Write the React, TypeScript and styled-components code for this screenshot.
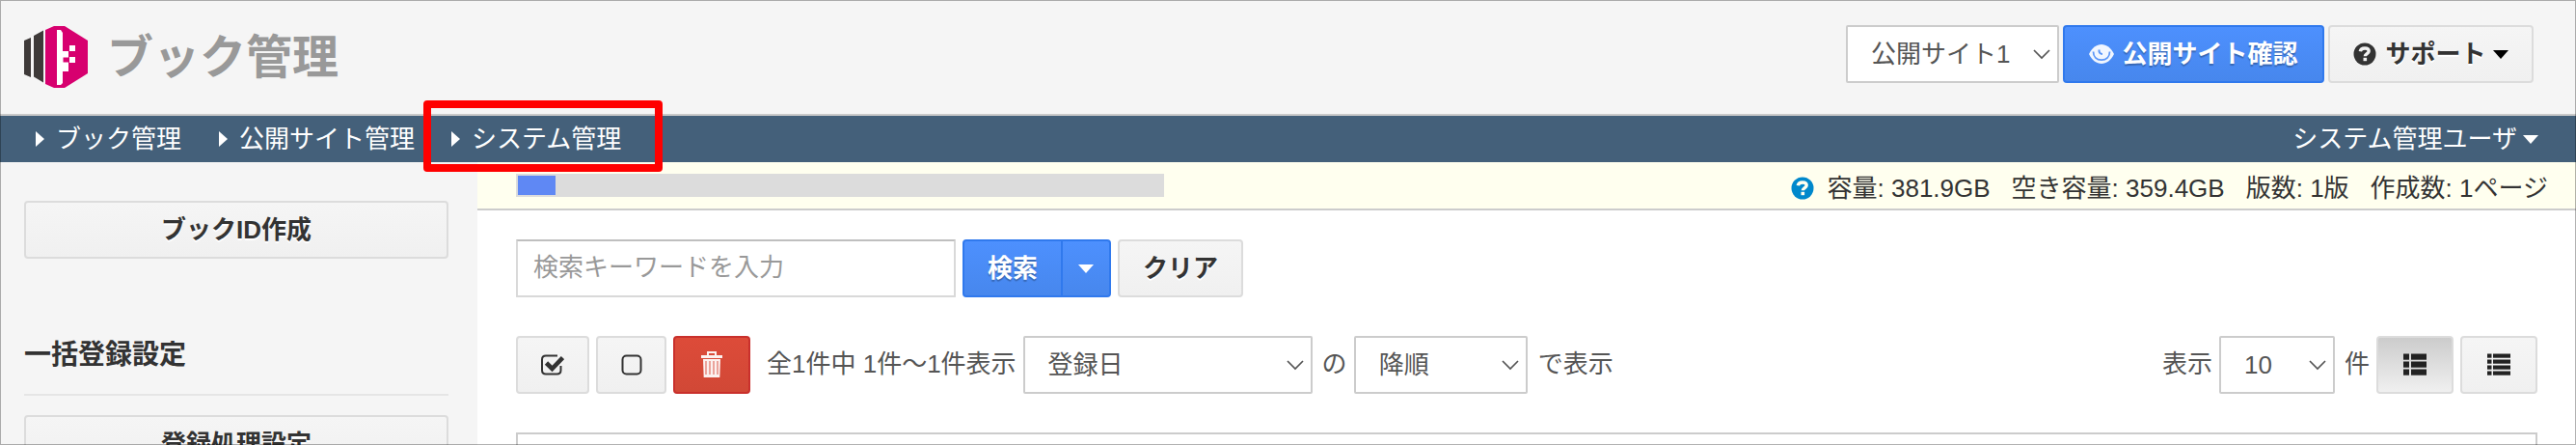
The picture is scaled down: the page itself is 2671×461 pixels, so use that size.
import React, { FC } from "react";
import styled, { createGlobalStyle, css } from "styled-components";

const GlobalStyle = createGlobalStyle`
  * {
    box-sizing: border-box;
  }
  body {
    margin: 0;
    background: #fff;
    color: #333;
    font-family: "Liberation Sans", "Noto Sans CJK JP", sans-serif;
    font-size: 26px;
    line-height: 38px;
    overflow: hidden;
  }
`;

interface gapProps {
  before?: number;
  after?: number;
}

interface sizeProps {
  width: number;
}

const Page = styled.div`
  position: relative;
  width: 2671px;
  height: 461px;
  overflow: hidden;
`;

const Frame = styled.div`
  position: absolute;
  inset: 0;
  border: 1px solid rgba(0, 0, 0, 0.3);
  pointer-events: none;
`;

const Header = styled.header`
  display: flex;
  justify-content: space-between;
  height: 120px;
  padding: 26px 44px 0 25px;
  background: #f5f5f5;
  border-bottom: 2px solid #c9c9c9;
`;

const Brand = styled.div`
  display: flex;
  align-items: flex-start;
  gap: 20px;
  svg {
    margin-top: 1px;
  }
`;

const Title = styled.h1`
  margin: 0;
  color: #999;
  font-size: 48px;
  font-weight: bold;
  line-height: 68px;
`;

const HeaderTools = styled.div`
  display: flex;
  align-items: flex-start;
  gap: 4px;
`;

const Select = styled.div<sizeProps>`
  display: flex;
  flex-shrink: 0;
  align-items: center;
  justify-content: space-between;
  width: ${(props) => props.width}px;
  height: 60px;
  padding: 0 7px 0 24px;
  background: #fff;
  border: 2px solid #ccc;
  border-radius: 2px;
  color: #555;
  white-space: nowrap;
`;

const tones = {
  plain: css`
    background: linear-gradient(#f5f5f5, #f0f0f0);
    border-color: #dcdcdc;
    color: #333;
    text-shadow: 0 2px 0 #fff;
  `,
  pressed: css`
    background: linear-gradient(#ccc, #f0f0f0);
    border-color: #dcdcdc;
    color: #333;
  `,
  blue: css`
    background: linear-gradient(#4d90fe, #4787ed);
    border-color: #3079ed;
    color: #fff;
    text-shadow: 0 2px 1px rgba(0, 0, 0, 0.25);
  `,
  red: css`
    background: linear-gradient(#dd4b39, #d14836);
    border-color: #c9302c;
    color: #fff;
  `,
};

interface buttonProps {
  width: number;
  tone?: keyof typeof tones;
}

const Button = styled.button<buttonProps>`
  display: flex;
  flex-shrink: 0;
  align-items: center;
  justify-content: center;
  width: ${(props) => props.width}px;
  height: 60px;
  padding: 0;
  border: 2px solid;
  border-radius: 4px;
  font: inherit;
  font-weight: bold;
  white-space: nowrap;
  ${(props) => tones[props.tone || "plain"]}
`;

const ButtonLabel = styled.span<gapProps>`
  margin: 0 ${(props) => props.after || 0}px 0 ${(props) => props.before || 0}px;
  padding-bottom: 1px;
`;

const Nav = styled.nav`
  display: flex;
  height: 48px;
  padding: 0 39px 0 37px;
  background: #44607a;
  color: #fff;
`;

const NavItem = styled.a<sizeProps>`
  display: flex;
  align-items: center;
  gap: 12px;
  width: ${(props) => props.width}px;
  height: 48px;
  white-space: nowrap;
`;

const NavUser = styled.a`
  display: flex;
  align-items: center;
  gap: 6px;
  height: 48px;
  margin-left: auto;
`;

const ArrowRight = styled.i`
  border: solid transparent;
  border-width: 8px 0 8px 9px;
  border-left-color: #fff;
`;

const Caret = styled.i<{ color?: string }>`
  border: solid transparent;
  border-width: 9px 8px 0;
  border-top-color: ${(props) => props.color || "#fff"};
`;

// red marker laid over the system menu
const Marker = styled.div`
  position: absolute;
  left: 439px;
  top: 104px;
  width: 248px;
  height: 74px;
  border: 8px solid #f00;
  border-radius: 4px;
`;

const Columns = styled.div`
  display: flex;
  height: 293px;
`;

const Sidebar = styled.aside`
  width: 495px;
  padding: 40px 30px 0 25px;
  background: #f5f5f5;
`;

const SidebarHeading = styled.h2`
  height: 142px;
  margin: 0 0 20px;
  padding-top: 80px;
  border-bottom: 2px solid #e5e5e5;
  font-size: 28px;
  line-height: 40px;
`;

const Main = styled.main`
  flex: 1;
`;

const StatusBar = styled.div`
  display: flex;
  justify-content: space-between;
  height: 50px;
  padding: 0 29px 0 40px;
  background: #ffffef;
  border-bottom: 2px solid #ccc;
`;

const Meter = styled.div`
  width: 672px;
  height: 24px;
  margin-top: 12px;
  padding: 2px;
  background: #dcdcdc;
`;

const MeterFill = styled.div`
  height: 20px;
  background: #5f88f4;
`;

const StatusList = styled.div`
  display: flex;
  align-items: center;
  gap: 22px;
  height: 54px;
  white-space: nowrap;
  svg {
    margin-right: -8px;
  }
`;

const SearchRow = styled.div`
  display: flex;
  gap: 7px;
  padding: 30px 40px 0;
`;

const SearchInput = styled.input`
  width: 456px;
  height: 60px;
  padding: 0 16px 1px;
  border: 2px solid #d9d9d9;
  border-top-color: #bfbfbf;
  border-radius: 1px;
  font: inherit;
  &::placeholder {
    color: #999;
    opacity: 1;
  }
`;

const SplitButton = styled.div`
  display: flex;
  button:first-child {
    border-radius: 4px 0 0 4px;
  }
  button:last-child {
    margin-left: -2px;
    border-radius: 0 4px 4px 0;
  }
`;

const ListRow = styled.div`
  display: flex;
  gap: 7px;
  padding: 40px 40px 0;
`;

const RowText = styled.span<gapProps>`
  margin-left: ${(props) => props.before || 0}px;
  padding-top: 10px;
  color: #555;
  white-space: nowrap;
`;

const RowEnd = styled.div`
  display: flex;
  gap: 7px;
  margin-left: auto;
`;

const Table = styled.div`
  height: 40px;
  margin: 40px 40px 0;
  border: 2px solid #ccc;
`;

const Logo: FC = () => (
  <svg width="66" height="64" viewBox="0 0 66 64">
    <path fill="#3e3a39" d="M0 15l7-3v41l-7-3zM10 10l10-5.500v54l-10-6z" />
    <path fill="#d7006f" d="M22 4l9-4h11l24 15v34L42 64H31l-9-4z" />
    <path
      fill="#fff"
      d="M34 4h4l2 3v19h6v21h-6v12l-2 2h-4z"
    />
    <path fill="#fff" d="M47 20h6v6h-6zM47 32h6v6h-6z" />
    <path fill="#d7006f" d="M40.500 32.500h5.500v5h-5.500z" />
    <path fill="#d7006f" d="M36 0h2v2.500h-2zM36 61.500h2V64h-2z" />
  </svg>
);

const Chevron: FC = () => (
  <svg width="18" height="12" viewBox="0 0 18 12" fill="none" stroke="#555" strokeWidth="1.700">
    <path d="M1 2l8 8 8-8" />
  </svg>
);

const EyeIcon: FC = () => (
  <svg width="26" height="20" viewBox="0 0 26 20">
    <path fill="#fff" opacity=".92" d="M0 10C3 3.500 8 0 13 0s10 3.500 13 10c-3 6.500-8 10-13 10S3 16.500 0 10z" />
    <path
      fill="none"
      stroke="#5b96f8"
      strokeWidth="1.800"
      d="M4.500 7.500C4.500 13 8 16.200 13 16.200s8.500-3.200 8.500-8.700"
    />
    <path fill="none" stroke="#5b96f8" strokeWidth="2" d="M10.500 5.500c-.3 3 1.200 4.500 3.500 4.500" />
  </svg>
);

const HelpIcon: FC<{ color: string; mark: string }> = ({ color, mark }) => (
  <svg width="24" height="24" viewBox="0 0 24 24">
    <circle cx="12" cy="12" r="11.500" fill={color} />
    <path
      fill="none"
      stroke={mark}
      strokeWidth="3.400"
      d="M7.300 9.300C7.600 7 9.500 6 12 6c2.600 0 4.200 1.200 4.200 3 0 2.400-3.800 2.700-3.900 5.200"
    />
    <path fill={mark} d="M10.500 15.800h3.600v3.400h-3.600z" />
  </svg>
);

const CheckIcon: FC = () => (
  <svg width="24" height="22" viewBox="0 0 24 22" fill="none" stroke="#333">
    <path
      strokeWidth="2"
      d="M17 1.500H5Q1 1.500 1 5.500v11q0 4 4 4h11.500q4 0 4-4V12"
    />
    <path strokeWidth="4.600" d="M5.500 9l6 6L22.500 3.500" />
  </svg>
);

const BoxIcon: FC = () => (
  <svg width="22" height="22" viewBox="0 0 22 22" fill="none" stroke="#333" strokeWidth="2">
    <rect x="1.500" y="1.500" width="19" height="19" rx="4" />
  </svg>
);

const TrashIcon: FC = () => (
  <svg width="22" height="28" viewBox="0 0 22 28">
    <path fill="#fff" opacity=".92" d="M6 4V0h10v4h6v3H0V4zM8 4h6V2H8z" fillRule="evenodd" />
    <path fill="#fff" opacity=".92" d="M2 8h18l-.7 19H2.700z" />
    <path
      stroke="#eba39b"
      strokeWidth="2"
      d="M5 10v14M9 10v14M13 10v14M17 10v14"
    />
  </svg>
);

const ListIcon: FC<{ rows: number }> = ({ rows }) => {
  const step = rows === 3 ? 8 : 6;
  const bar = rows === 3 ? 6.2 : 4.2;

  return (
    <svg width="26" height="24" viewBox="0 0 26 24" fill="#222">
      {Array.from({ length: rows }, (_, i) => (
        <g key={i}>
          <rect x="1" y={i * step + 0.5} width={rows === 3 ? 6 : 4.5} height={bar} />
          <rect x={rows === 3 ? 9 : 7} y={i * step + 0.5} width={rows === 3 ? 16 : 18} height={bar} />
        </g>
      ))}
    </svg>
  );
};

const App: FC = () => {
  return (
    <Page>
      <GlobalStyle />
      <Header>
        <Brand>
          <Logo />
          <Title>ブック管理</Title>
        </Brand>
        <HeaderTools>
          <Select width={221}>
            公開サイト1
            <Chevron />
          </Select>
          <Button width={271} tone="blue">
            <EyeIcon />
            <ButtonLabel before={8}>公開サイト確認</ButtonLabel>
          </Button>
          <Button width={213}>
            <HelpIcon color="#333" mark="#f3f3f3" />
            <ButtonLabel before={9} after={7}>サポート</ButtonLabel>
            <Caret color="#000" />
          </Button>
        </HeaderTools>
      </Header>
      <Nav>
        <NavItem width={190}>
          <ArrowRight />
          ブック管理
        </NavItem>
        <NavItem width={241}>
          <ArrowRight />
          公開サイト管理
        </NavItem>
        <NavItem width={200}>
          <ArrowRight />
          システム管理
        </NavItem>
        <NavUser>
          システム管理ユーザ
          <Caret />
        </NavUser>
      </Nav>
      <Columns>
        <Sidebar>
          <Button width={440}>ブックID作成</Button>
          <SidebarHeading>一括登録設定</SidebarHeading>
          <Button width={440}>登録処理設定</Button>
        </Sidebar>
        <Main>
          <StatusBar>
            <Meter>
              <MeterFill style={{ width: `${(22.5 / 381.9) * 100}%` }} />
            </Meter>
            <StatusList>
              <HelpIcon color="#08c" mark="#ffffef" />
              <span>容量: 381.9GB</span>
              <span>空き容量: 359.4GB</span>
              <span>版数: 1版</span>
              <span>作成数: 1ページ</span>
            </StatusList>
          </StatusBar>
          <SearchRow>
            <SearchInput placeholder="検索キーワードを入力" />
            <SplitButton>
              <Button width={104} tone="blue">検索</Button>
              <Button width={52} tone="blue">
                <Caret />
              </Button>
            </SplitButton>
            <Button width={130}>クリア</Button>
          </SearchRow>
          <ListRow>
            <Button width={76}>
              <CheckIcon />
            </Button>
            <Button width={73}>
              <BoxIcon />
            </Button>
            <Button width={80} tone="red">
              <TrashIcon />
            </Button>
            <RowText before={10}>全1件中 1件〜1件表示</RowText>
            <Select width={300}>
              登録日
              <Chevron />
            </Select>
            <RowText before={3}>の</RowText>
            <Select width={180}>
              降順
              <Chevron />
            </Select>
            <RowText before={4}>で表示</RowText>
            <RowEnd>
              <RowText>表示</RowText>
              <Select width={120}>
                10
                <Chevron />
              </Select>
              <RowText before={3}>件</RowText>
              <Button width={80} tone="pressed">
                <ListIcon rows={3} />
              </Button>
              <Button width={80}>
                <ListIcon rows={4} />
              </Button>
            </RowEnd>
          </ListRow>
          <Table />
        </Main>
      </Columns>
      <Marker />
      <Frame />
    </Page>
  );
};

export default App;
